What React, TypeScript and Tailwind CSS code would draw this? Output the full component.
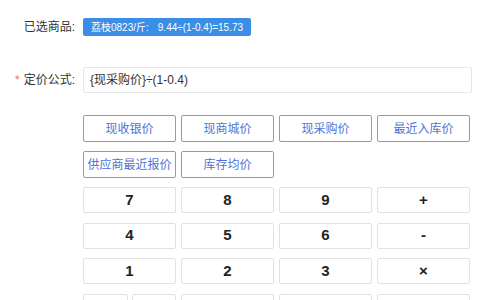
import React from "react";

const presets = ["现收银价", "现商城价", "现采购价", "最近入库价", "供应商最近报价", "库存均价"];
const keys = ["7", "8", "9", "+", "4", "5", "6", "-", "1", "2", "3", "×"];

export default function App() {
  return (
    <div
      className="w-[484px] h-[300px] overflow-hidden bg-white text-[#333] pt-[18px] pr-[12px]"
      style={{ fontFamily: '"Liberation Sans", "Noto Sans CJK SC", sans-serif' }}
    >
      {/* 已选商品 */}
      <div className="flex items-center h-[18px]">
        <div className="w-[83px] pr-[8px] text-right text-[12px]">已选商品:</div>
        <span className="h-[18px] px-[8px] flex items-center rounded-[2px] bg-[#3a8ee6] text-white text-[10px]">
          <span>荔枝0823/斤:</span>
          <span className="ml-[9px]">9.44÷(1-0.4)=15.73</span>
        </span>
      </div>

      {/* 定价公式 */}
      <div className="flex items-center mt-[31px]">
        <div className="w-[83px] pr-[8px] text-right text-[12px]">
          <span className="text-[#f56c6c] mr-[4px]">*</span>定价公式:
        </div>
        <div className="flex-1 h-[26px] border border-[#e4e7ed] rounded-[2px] flex items-center px-[6px] text-[12px]">
          {"{现采购价}÷(1-0.4)"}
        </div>
      </div>

      <div className="ml-[83px] w-[387px] mt-[22px]">
        {/* 价格类型 */}
        <div className="grid grid-cols-4 gap-x-[5px] gap-y-[9px]">
          {presets.map((p) => (
            <button
              key={p}
              className="h-[27px] border border-[#7d9af0] rounded-[2px] text-[#4f72d8] text-[12px] bg-white"
            >
              {p}
            </button>
          ))}
        </div>

        {/* 数字键盘 */}
        <div className="grid grid-cols-4 gap-x-[5px] gap-y-[9.5px] mt-[9px]">
          {keys.map((k) => (
            <button
              key={k}
              className="h-[26px] border border-[#e2e2e2] rounded-[2px] text-[#222] font-bold text-[15px] bg-white flex items-center justify-center"
            >
              {k}
            </button>
          ))}
          <div className="flex gap-[4px]">
            <button className="flex-1 h-[26px] border border-[#e2e2e2] rounded-[2px] font-bold text-[15px]">(</button>
            <button className="flex-1 h-[26px] border border-[#e2e2e2] rounded-[2px] font-bold text-[15px]">)</button>
          </div>
          <button className="h-[26px] border border-[#e2e2e2] rounded-[2px] font-bold text-[15px]">0</button>
          <button className="h-[26px] border border-[#e2e2e2] rounded-[2px] font-bold text-[15px]">.</button>
          <button className="h-[26px] border border-[#e2e2e2] rounded-[2px] font-bold text-[15px]">÷</button>
        </div>
      </div>
    </div>
  );
}
